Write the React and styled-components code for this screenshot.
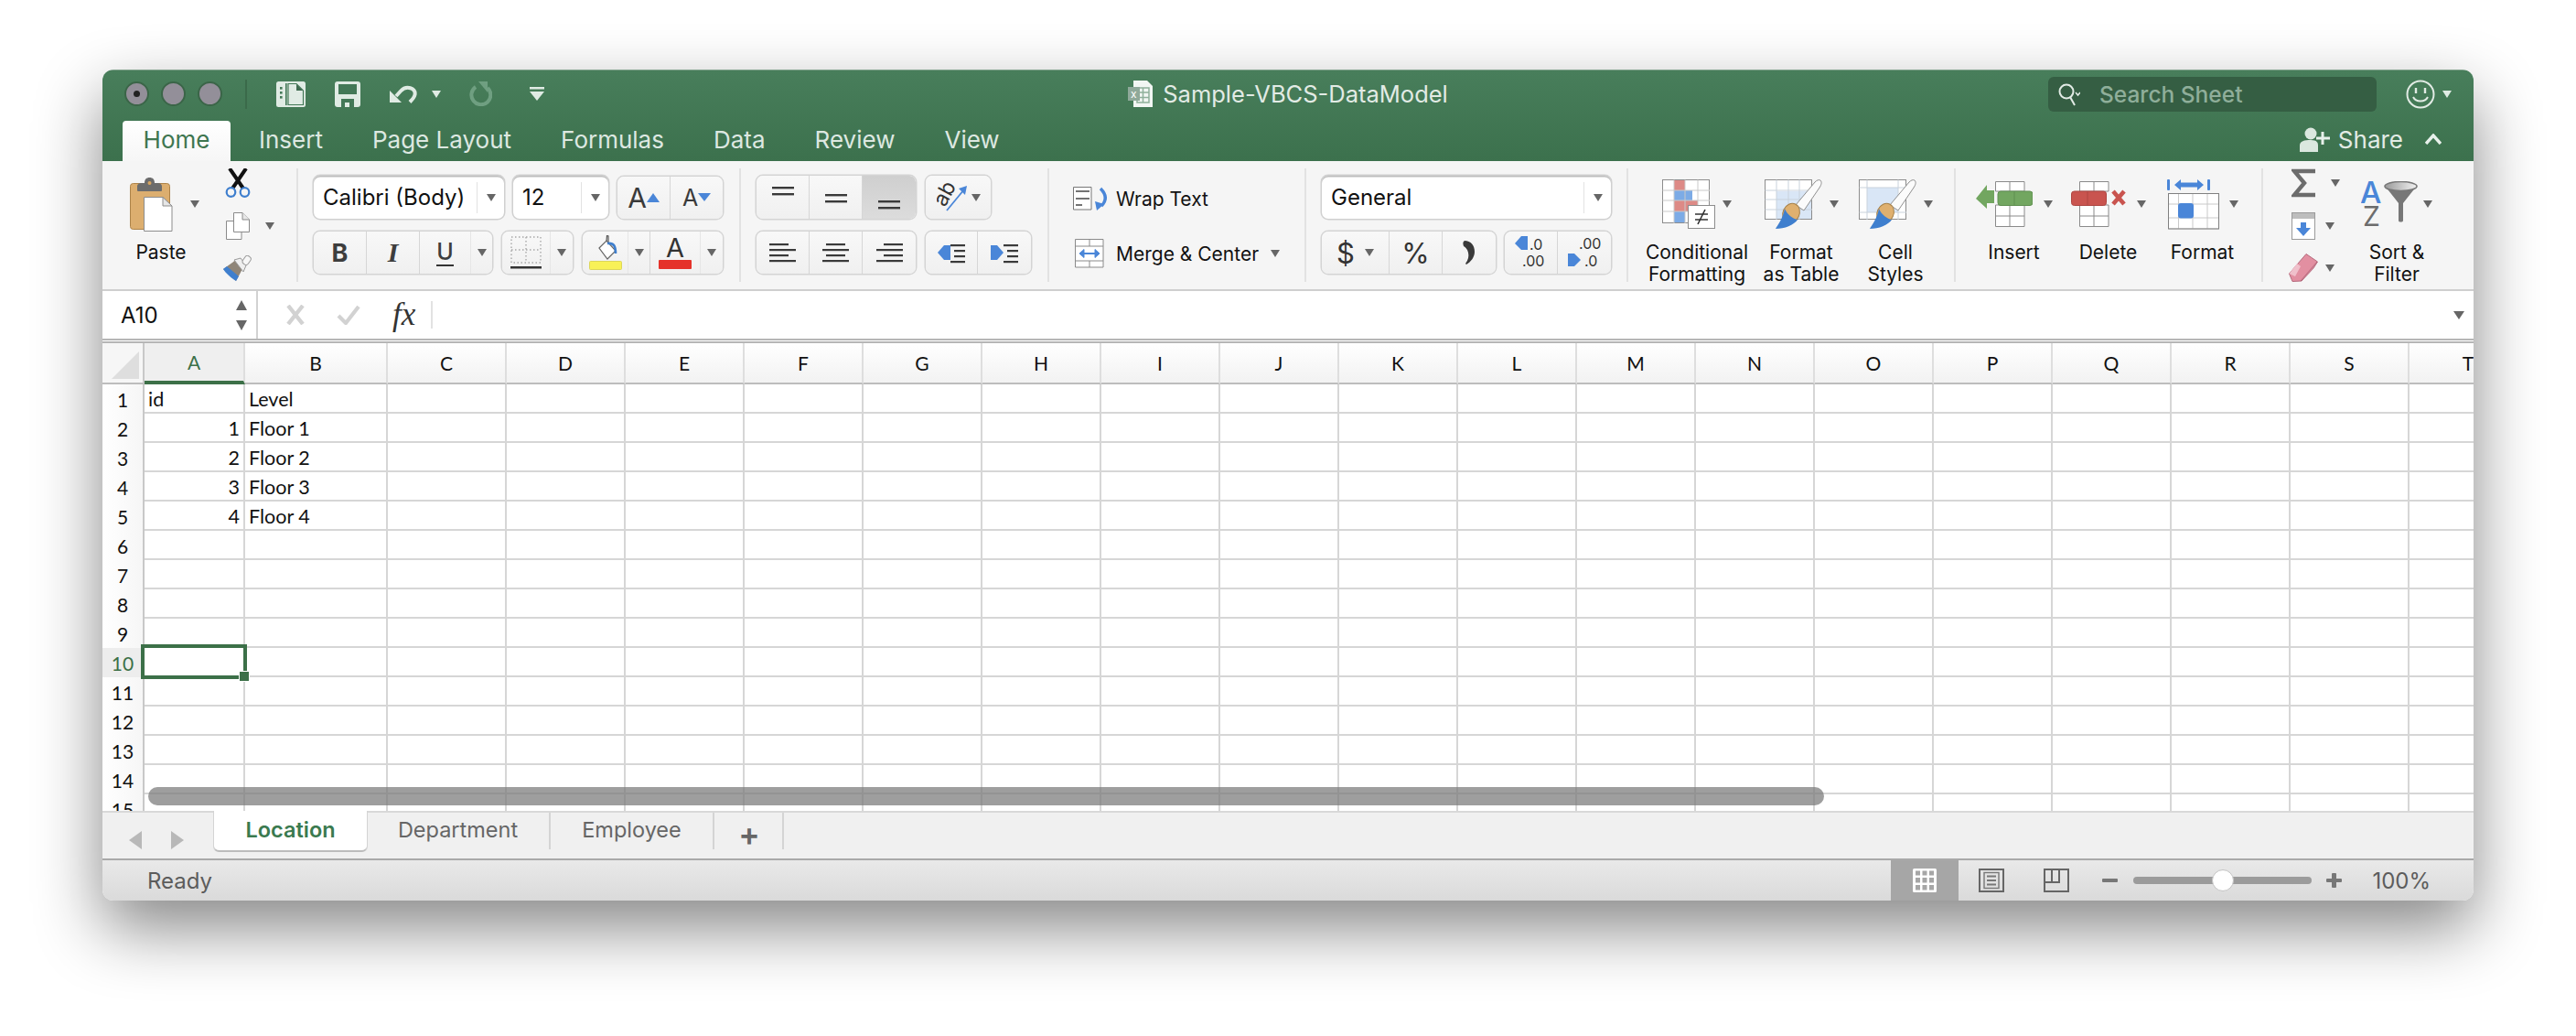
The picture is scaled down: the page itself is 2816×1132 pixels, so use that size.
import React from 'react';
import styled, { createGlobalStyle } from 'styled-components';

const GlobalStyle = createGlobalStyle`
  html, body { margin: 0; padding: 0; background: #fff; }
  body { font-family: Inter, "Liberation Sans", sans-serif; }
  svg { display: block; flex: none; }
`;

const Stage = styled.div`
  width: 2816px;
  height: 1132px;
  padding: 76px 112px 0;
  box-sizing: border-box;
  background: #fff;
  overflow: hidden;
`;

const Window = styled.div`
  width: 2592px;
  height: 908px;
  display: flex;
  flex-direction: column;
  border-radius: 12px;
  overflow: hidden;
  box-shadow: 0 30px 72px rgba(0, 0, 0, 0.48);
`;

const TitleBar = styled.div`
  height: 100px;
  flex: none;
  background: linear-gradient(#487e5b, #3c714d);
  border-top: 1px solid #7d9f88;
  box-sizing: border-box;
`;

const TitleRow = styled.div`
  height: 55px;
  padding-bottom: 4px;
  box-sizing: border-box;
  display: grid;
  grid-template-columns: 1fr auto 1fr;
  align-items: center;
`;

const QuickBar = styled.div`
  display: flex;
  align-items: center;
  padding-left: 24px;
`;

const Light = styled.div`
  width: 27px;
  height: 27px;
  margin-right: 13px;
  border-radius: 50%;
  background: #938f99;
  border: 2px solid #3b6548;
  box-sizing: border-box;
  display: flex;
  align-items: center;
  justify-content: center;
  &::after {
    content: '';
    display: ${p => (p.$dot ? 'block' : 'none')};
    width: 7px;
    height: 7px;
    border-radius: 50%;
    background: #222;
  }
`;

const QuickSep = styled.div`
  width: 2px;
  height: 32px;
  margin-left: 12px;
  background: #3b6a4a;
`;

const Tool = styled.div`
  margin-left: ${p => p.$ml || 0}px;
`;

const DocTitle = styled.div`
  display: flex;
  align-items: center;
  gap: 10px;
  font-size: 25.5px;
  color: #e2ebe5;
`;

const TitleRight = styled.div`
  display: flex;
  align-items: center;
  justify-content: flex-end;
  padding-right: 24px;
`;

const Search = styled.div`
  width: 359px;
  height: 38px;
  margin-right: 32px;
  padding-left: 11px;
  box-sizing: border-box;
  display: flex;
  align-items: center;
  gap: 21px;
  background: #355e43;
  border-radius: 6px;
  color: #8fae9a;
  font-size: 24.5px;
  font-weight: 500;
`;

const TabRow = styled.div`
  height: 44px;
  padding-left: 22px;
  display: flex;
  align-items: stretch;
`;

const Tab = styled.div`
  display: flex;
  align-items: center;
  padding: 0 27px 3px;
  font-size: 26px;
  white-space: nowrap;
  color: #dde8e1;
`;

const HomeTab = styled(Tab)`
  width: 118px;
  box-sizing: border-box;
  justify-content: center;
  padding: 0 0 3px;
  margin-right: 4px;
  background: linear-gradient(#fff, #f6f6f6);
  border-radius: 4px 4px 0 0;
  color: #3f7650;
`;

const ShareBox = styled.div`
  margin-left: auto;
  padding: 0 35px 4px 0;
  display: flex;
  align-items: center;
  font-size: 26px;
  color: #e2ebe5;
`;

const ShareText = styled.span`
  margin: 0 24px 0 8px;
`;

const Ribbon = styled.div`
  height: 142px;
  flex: none;
  padding: 8px 0;
  box-sizing: border-box;
  display: flex;
  background: #f5f5f5;
  border-bottom: 2px solid #cfcfcf;
`;

const Group = styled.div`
  width: ${p => p.$w}px;
  height: 124px;
  flex: none;
  box-sizing: border-box;
  padding: ${p => p.$pad};
  display: flex;
  flex-direction: ${p => p.$dir || 'row'};
  gap: ${p => p.$gap || 0}px;
  border-right: ${p => (p.$last ? 'none' : '2px solid #e2e2e2')};
`;

const Row = styled.div`
  height: ${p => p.$h || 46}px;
  display: flex;
  align-items: center;
  gap: ${p => p.$gap || 10}px;
`;

const Combo = styled.div`
  width: ${p => p.$w}px;
  height: 47px;
  padding-left: 10px;
  box-sizing: border-box;
  display: flex;
  align-items: center;
  background: #fff;
  border-radius: 7px;
  font-size: 24px;
  color: #111;
  box-shadow: 0 0 0 1.5px #d0d0d0, inset 0 1.5px 0 #bdbdbd;
`;

const ComboArrow = styled.div`
  margin-left: auto;
  width: 29px;
  height: 34px;
  border-left: 1px solid #e2e2e2;
  display: flex;
  align-items: center;
  justify-content: center;
`;

const Seg = styled.div`
  display: flex;
  background: linear-gradient(#f8f8f8, #f0f0f0);
  border-radius: 7px;
  box-shadow: 0 0 0 1.5px #d4d4d4;
  overflow: hidden;
`;

const Cell = styled.div`
  width: ${p => p.$w}px;
  height: ${p => p.$h || 46}px;
  box-sizing: border-box;
  display: flex;
  align-items: center;
  justify-content: center;
  gap: ${p => p.$gap || 0}px;
  color: #333;
  background: ${p => (p.$active ? 'linear-gradient(#cfcfcf, #dcdcdc)' : 'transparent')};
  border-right: ${p => (p.$last ? 'none' : `1.5px solid ${p.$thin ? '#e6e6e6' : '#d6d6d6'}`)};
`;

const Caret = styled.div`
  width: 0;
  height: 0;
  flex: none;
  border-left: ${p => p.$s || 5}px solid transparent;
  border-right: ${p => p.$s || 5}px solid transparent;
  border-top: ${p => (p.$s || 5) * 1.6}px solid ${p => p.$c || '#666'};
`;

const CaretUp = styled.div`
  width: 0;
  height: 0;
  border-left: 6px solid transparent;
  border-right: 6px solid transparent;
  border-bottom: 11px solid #666;
`;

const CaretDown = styled(CaretUp)`
  border-bottom: none;
  border-top: 11px solid #666;
`;

const Bold = styled.span`
  font: 700 27px Inter, sans-serif;
  color: #3d3d3d;
`;

const Ital = styled.span`
  font: italic 700 30px "Liberation Serif", serif;
  color: #3d3d3d;
`;

const Under = styled.span`
  font: 500 25px Inter, sans-serif;
  color: #3d3d3d;
  line-height: 27px;
  border-bottom: 2.5px solid #333;
`;

const GrowA = styled.span`
  font: 400 ${p => p.$s}px Inter, sans-serif;
  color: #3a3a3a;
`;

const TextCmd = styled.div`
  height: 46px;
  width: 100%;
  display: flex;
  align-items: center;
  font-size: 21px;
  color: #111;
`;

const CmdIcon = styled.div`
  width: 47px;
  flex: none;
  padding-left: ${p => p.$pl || 0}px;
  box-sizing: border-box;
`;

const CmdCaret = styled.div`
  margin-left: 13px;
`;

const Symbol = styled.span`
  font: 400 ${p => p.$s || 31}px Inter, sans-serif;
  color: #333;
`;

const BigButton = styled.div`
  width: ${p => p.$w}px;
  flex: none;
  padding-top: ${p => p.$top ?? 8}px;
  display: flex;
  flex-direction: column;
  align-items: center;
`;

const IconRow = styled.div`
  height: 62px;
  flex: none;
  margin-left: ${p => p.$shift || 0}px;
  display: flex;
  align-items: center;
  gap: ${p => p.$gap || 8}px;
`;

const BigLabel = styled.div`
  margin-top: 10px;
  flex: none;
  font-size: 21px;
  line-height: 24px;
  color: #111;
  text-align: center;
  white-space: pre-line;
`;

const SmallCol = styled.div`
  width: ${p => p.$w}px;
  flex: none;
  display: flex;
  flex-direction: column;
  justify-content: space-between;
`;

const SmallRow = styled.div`
  height: ${p => p.$h}px;
  display: flex;
  align-items: center;
  gap: ${p => p.$gap || 10}px;
`;

const SmallIcon = styled.div`
  width: 32px;
  flex: none;
  display: flex;
  justify-content: center;
`;

const FormulaBar = styled.div`
  height: 57px;
  flex: none;
  box-sizing: border-box;
  display: flex;
  align-items: center;
  background: #fff;
  border-bottom: 5px double #b6b6b6;
`;

const NameBox = styled.div`
  width: 170px;
  height: 52px;
  flex: none;
  box-sizing: border-box;
  padding: 0 10px 0 20px;
  display: flex;
  align-items: center;
  justify-content: space-between;
  border-right: 2px solid #d2d2d2;
  font-size: 24px;
  color: #111;
`;

const Spinner = styled.div`
  display: flex;
  flex-direction: column;
  gap: 11px;
`;

const FormulaTools = styled.div`
  display: flex;
  align-items: center;
  gap: 35px;
  padding-left: 31px;
`;

const FxSep = styled.div`
  width: 2px;
  height: 30px;
  margin-left: -18px;
  background: #e2e2e2;
`;

const Fx = styled.span`
  font: italic 400 35px "Liberation Serif", serif;
  color: #333;
`;

const FormulaEnd = styled.div`
  margin-left: auto;
  padding-right: 10px;
`;

const Sheet = styled.div`
  position: relative;
  height: 511px;
  flex: none;
  background: #fff;
  overflow: hidden;
`;

const SheetRow = styled.div`
  display: flex;
  height: ${p => p.$h || 32}px;
`;

const RowHead = styled.div`
  width: 46px;
  flex: none;
  box-sizing: border-box;
  display: flex;
  align-items: center;
  justify-content: center;
  padding-top: 1px;
  font: 400 21px Lato, sans-serif;
  color: ${p => (p.$on ? '#3c7048' : '#111')};
  background: ${p => (p.$on ? '#ededed' : 'linear-gradient(90deg, #fff, #f6f6f6)')};
  border-right: 2px solid #c8c8c8;
`;

const Corner = styled.div`
  width: 46px;
  flex: none;
  box-sizing: border-box;
  padding: 9px 0 0 10px;
  background: #f6f6f6;
  border-right: 2px solid #c8c8c8;
  border-bottom: 2px solid #bdbdbd;
`;

const CornerMark = styled.div`
  width: 30px;
  height: 30px;
  background: #dedede;
  clip-path: polygon(100% 0, 100% 100%, 0 100%);
`;

const ColHead = styled.div`
  width: ${p => p.$w}px;
  flex: none;
  box-sizing: border-box;
  display: flex;
  align-items: center;
  justify-content: center;
  font: 400 21px Lato, sans-serif;
  color: ${p => (p.$on ? '#3c7048' : '#111')};
  background: ${p => (p.$on ? '#efefef' : 'linear-gradient(#fff, #f2f2f2)')};
  border-right: 2px solid #dedede;
  border-bottom: ${p => (p.$on ? '4px solid #3c7048' : '2px solid #bdbdbd')};
`;

const GridCell = styled.div`
  position: relative;
  width: ${p => p.$w}px;
  flex: none;
  box-sizing: border-box;
  padding: 2px ${p => (p.$num ? 4 : 3)}px 0 4px;
  display: flex;
  align-items: center;
  justify-content: ${p => (p.$num ? 'flex-end' : 'flex-start')};
  border-right: 2px solid #d6d6d6;
  border-bottom: 2px solid #d6d6d6;
  font: 400 21.5px Lato, sans-serif;
  color: #111;
`;

const Selection = styled.div`
  position: absolute;
  left: -4px;
  top: -4px;
  width: 116px;
  height: 38px;
  box-sizing: border-box;
  border: 4px solid #3c7048;
  z-index: 2;
  &::after {
    content: '';
    position: absolute;
    right: -7px;
    bottom: -7px;
    width: 12px;
    height: 12px;
    background: #3c7048;
    border: 1px solid #fff;
    box-sizing: border-box;
  }
`;

const ScrollThumb = styled.div`
  position: absolute;
  left: 50px;
  top: 485px;
  width: 1832px;
  height: 20px;
  border-radius: 10px;
  background: rgba(120, 120, 120, 0.72);
  z-index: 3;
`;

const TabBar = styled.div`
  height: 52px;
  flex: none;
  box-sizing: border-box;
  display: flex;
  background: #f0f0f0;
  border-top: 2px solid #d8d8d8;
`;

const TabArrows = styled.div`
  width: 122px;
  flex: none;
  box-sizing: border-box;
  padding: 10px 0 0 29px;
  display: flex;
  align-items: center;
  gap: 32px;
`;

const ArrowLeft = styled.div`
  width: 0;
  height: 0;
  border-top: 10px solid transparent;
  border-bottom: 10px solid transparent;
  border-right: 14px solid #b8b8b8;
`;

const ArrowRight = styled(ArrowLeft)`
  border-right: none;
  border-left: 14px solid #b8b8b8;
`;

const SheetTab = styled.div`
  width: ${p => p.$w}px;
  height: 40px;
  flex: none;
  box-sizing: border-box;
  padding-bottom: 4px;
  display: flex;
  align-items: center;
  justify-content: center;
  font-size: 23.5px;
  color: #666;
  border-right: 2px solid #d4d4d4;
`;

const ActiveTab = styled(SheetTab)`
  height: 45px;
  margin-top: -2px;
  padding-bottom: 3px;
  background: #fff;
  color: #3a7a4f;
  font-weight: 600;
  border-right: none;
  border-bottom: 2px solid #bcbcbc;
  border-radius: 0 0 6px 6px;
  box-shadow: -1px 0 0 #d4d4d4, 1px 0 0 #d4d4d4;
`;

const AddTab = styled(SheetTab)`
  padding: 5px 0 0 2px;
  font-size: 35px;
  font-weight: 600;
`;

const StatusBar = styled.div`
  flex: 1;
  box-sizing: border-box;
  display: flex;
  align-items: stretch;
  padding-left: 49px;
  background: linear-gradient(#e9e9e9, #dadada);
  border-top: 2px solid #a9a9a9;
  font-size: 24px;
  color: #5c5c5c;
`;

const Ready = styled.div`
  display: flex;
  align-items: center;
  margin-right: auto;
`;

const ViewBtn = styled.div`
  width: ${p => p.$w}px;
  flex: none;
  display: flex;
  align-items: center;
  justify-content: center;
  background: ${p => (p.$on ? '#a6a6a6' : 'transparent')};
`;

const Zoom = styled.div`
  display: flex;
  align-items: center;
  padding-left: 15px;
  padding-right: 47px;
`;

const ZoomMark = styled.div`
  position: relative;
  width: 17px;
  height: 4px;
  border-radius: 1px;
  background: #777;
  &::after {
    content: '';
    display: ${p => (p.$plus ? 'block' : 'none')};
    position: absolute;
    left: 6px;
    top: -6px;
    width: 5px;
    height: 16px;
    border-radius: 1px;
    background: #777;
  }
`;

const Slider = styled.div`
  position: relative;
  width: 195px;
  height: 8px;
  margin: 0 16px 0 17px;
  border-radius: 4px;
  background: #9b9b9b;
`;

const Thumb = styled.div`
  position: absolute;
  left: 86px;
  top: -8px;
  width: 24px;
  height: 24px;
  box-sizing: border-box;
  border-radius: 50%;
  background: #fff;
  border: 1px solid #c2c2c2;
`;

const ZoomValue = styled.div`
  margin-left: 33px;
`;

const ICON = '#e0ebe4';
const GREEN = '#437857';

const SidebarIcon = () => (
  <svg width="32" height="28" viewBox="0 0 32 28">
    <rect width="32" height="28" rx="2.5" fill={ICON} />
    <rect x="10" y="2" width="1.6" height="24" fill={GREEN} />
    <path d="M13 2.5H22L29.5 10V25.5H13Z" fill={ICON} stroke={GREEN} strokeWidth="1.2" />
    <path d="M22 3V10H29" fill="#3f6a50" />
    <rect x="4" y="6" width="2.6" height="2.6" fill={GREEN} />
    <rect x="4" y="11" width="2.6" height="2.6" fill={GREEN} />
    <rect x="4" y="16" width="2.6" height="2.6" fill={GREEN} />
  </svg>
);

const SaveIcon = () => (
  <svg width="28" height="28" viewBox="0 0 28 28">
    <path d="M3 0H25A3 3 0 0 1 28 3V25A3 3 0 0 1 25 28H3A3 3 0 0 1 0 25V3A3 3 0 0 1 3 0Z" fill={ICON} />
    <rect x="4" y="3" width="20" height="11" fill={GREEN} />
    <rect x="7" y="19" width="14" height="9" fill={GREEN} />
    <rect x="11" y="23" width="5" height="5" fill={ICON} />
  </svg>
);

const UndoIcon = ({ c = ICON }) => (
  <svg width="30" height="21" viewBox="0 0 30 21">
    <path d="M0 7L13 20H0Z" fill={c} />
    <path d="M7 13L12 7.5C18 1 29 4 27.5 11.5C27 14.5 24.5 17 22 19.5" fill="none" stroke={c} strokeWidth="4" />
  </svg>
);

const RedoIcon = () => (
  <svg width="26" height="27" viewBox="0 0 26 27">
    <path d="M8 6A10.5 10.5 0 1 0 21 7" fill="none" stroke="#6f9f81" strokeWidth="4" />
    <path d="M11 0L21 0L21 12Z" fill="#6f9f81" />
  </svg>
);

const CustomizeIcon = () => (
  <svg width="16" height="16" viewBox="0 0 16 16">
    <rect width="16" height="2.5" fill={ICON} />
    <path d="M0 5H16L8 15Z" fill={ICON} />
  </svg>
);

const XlsDocIcon = () => (
  <svg width="28" height="29" viewBox="0 0 28 29">
    <path d="M6 0H21L27 6V29H6Z" fill="#f2f6f3" />
    <path d="M10 8H23V24H10ZM10 13H23M10 18.5H23M16.5 8V24" fill="none" stroke="#8fb09b" strokeWidth="1.5" />
    <rect y="7" width="13" height="15" fill="#8fa99a" />
    <text x="3" y="19" fontSize="12" fontFamily="Inter" fill="#fff">x</text>
  </svg>
);

const MagnifierIcon = () => (
  <svg width="24" height="26" viewBox="0 0 24 26">
    <circle cx="9" cy="10" r="7.5" fill="none" stroke="#e2ebe5" strokeWidth="2" />
    <path d="M13 16L18 25" stroke="#e2ebe5" strokeWidth="2" />
    <path d="M19 11L21.5 14L24 11" fill="none" stroke="#e2ebe5" strokeWidth="1.5" />
  </svg>
);

const SmileIcon = () => (
  <svg width="32" height="32" viewBox="0 0 32 32">
    <ellipse cx="16" cy="16" rx="14.5" ry="14.5" fill="none" stroke="#e2ebe5" strokeWidth="2" />
    <path d="M11 9V15M21 9V15" stroke="#e2ebe5" strokeWidth="2.4" />
    <path d="M8 19C11 25 21 25 24 19" fill="none" stroke="#e2ebe5" strokeWidth="2" />
  </svg>
);

const ShareIcon = () => (
  <svg width="34" height="28" viewBox="0 0 34 28">
    <circle cx="12" cy="8" r="6.5" fill="#dbe7df" />
    <path d="M0 28V21C0 16 5 15 12 15C19 15 20 18 20 21V28Z" fill="#dbe7df" />
    <path d="M25 6V20M18 13H33" stroke="#e8f0eb" strokeWidth="3" />
  </svg>
);

const ChevronUp = () => (
  <svg width="18" height="12" viewBox="0 0 18 12">
    <path d="M1 11L9 2L17 11" fill="none" stroke="#e8f0eb" strokeWidth="3.4" />
  </svg>
);

const PasteIcon = () => (
  <svg width="47" height="59" viewBox="0 0 47 59">
    <rect x="0.5" y="6.5" width="43" height="50" rx="3" fill="#dcae6f" stroke="#ad8349" />
    <path d="M8 10C8 7 10 6 13 6H16C16 2 18 0 21.5 0S27 2 27 6H30C33 6 35 7 35 10V14C35 15 34 15 33 15H10C9 15 8 15 8 14Z" fill="#6c6c6c" />
    <circle cx="21.5" cy="6" r="2" fill="#d6a45f" />
    <path d="M15.5 21.5H36L46 31V58.5H15.5Z" fill="#fff" stroke="#8d8d8d" />
    <path d="M36 21.5V31H46Z" fill="#e6e6e6" stroke="#8d8d8d" />
  </svg>
);

const ScissorsIcon = () => (
  <svg width="28" height="32" viewBox="0 0 28 32">
    <path d="M5 0L20 22M23 0L8 22" stroke="#111" strokeWidth="4" />
    <circle cx="6.5" cy="26" r="4.8" fill="#f5f5f5" stroke="#3f7fce" strokeWidth="2.2" />
    <circle cx="21.5" cy="26" r="4.8" fill="#f5f5f5" stroke="#3f7fce" strokeWidth="2.2" />
  </svg>
);

const CopyIcon = () => (
  <svg width="26" height="30" viewBox="0 0 26 30">
    <path d="M0.5 9.5H17V29.5H0.5Z" fill="#fff" stroke="#8a8a8a" />
    <path d="M8.5 0.5H18L25.5 8V21.5H8.5Z" fill="#fff" stroke="#8a8a8a" />
    <path d="M18 0.5V8H25.5" fill="#e8e8e8" stroke="#8a8a8a" />
  </svg>
);

const FormatPainterIcon = () => (
  <svg width="32" height="28" viewBox="0 0 32 28">
    <path d="M0 15L14 5L21 15L14 28Z" fill="#8f8578" />
    <path d="M0 15C3 20 9 25 14 28L17 23L4 12Z" fill="#3f7fce" />
    <path d="M12 5L19 3L25 11L22 18Z" fill="#efefef" stroke="#9a9a9a" />
    <rect x="22.5" y="0.5" width="7" height="10" rx="3" transform="rotate(35 26 5)" fill="#f7f7f7" stroke="#9a9a9a" />
  </svg>
);

const BorderIcon = () => (
  <svg width="34" height="36" viewBox="0 0 34 36">
    <path d="M1 1H33V29H1ZM17 1V29M1 15H33" fill="none" stroke="#a8a8a8" strokeWidth="1.4" strokeDasharray="1.5 2.5" />
    <rect y="33" width="34" height="2.5" fill="#333" />
  </svg>
);

const FillIcon = () => (
  <svg width="36" height="38" viewBox="0 0 36 38">
    <path d="M11 14L19 6L29 17L20 26Z" fill="#fff" stroke="#666" strokeWidth="1.2" />
    <path d="M19 6L19.5 0.5L21 1V10" fill="none" stroke="#555" strokeWidth="1.2" />
    <path d="M20 9C27 8 29 12 29 20" fill="none" stroke="#3f7fce" strokeWidth="2.6" />
    <rect x="0.5" y="28.5" width="35" height="9" rx="1" fill="#f8f157" stroke="#dcd65a" />
  </svg>
);

const ColorAIcon = () => (
  <svg width="36" height="36" viewBox="0 0 36 36">
    <text x="18" y="23" textAnchor="middle" fontFamily="Inter" fontSize="29" fill="#333">A</text>
    <rect y="26" width="36" height="10" rx="1" fill="#e5322a" />
  </svg>
);

const VAlignIcon = ({ y }) => (
  <svg width="24" height="46" viewBox="0 0 24 46">
    <rect y={y} width="24" height="2.4" fill="#3a3a3a" />
    <rect y={y + 7} width="24" height="2.4" fill="#3a3a3a" />
  </svg>
);

const HAlignIcon = ({ short }) => {
  const x = { left: 0, center: 4, right: 8 }[short];
  return (
    <svg width="29" height="22" viewBox="0 0 29 22">
      <rect y="1" x={x} width="21" height="2.2" fill="#3a3a3a" />
      <rect y="7" width="29" height="2.2" fill="#3a3a3a" />
      <rect y="13" x={x} width="21" height="2.2" fill="#3a3a3a" />
      <rect y="19" width="29" height="2.2" fill="#3a3a3a" />
    </svg>
  );
};

const IndentIcon = ({ flip }) => (
  <svg width="30" height="24" viewBox="0 0 30 24">
    {flip ? <path d="M0 4H7L14 12L7 20H0Z" fill="#4a86d8" /> : <path d="M14 4H7L0 12L7 20H14Z" fill="#4a86d8" />}
    <rect x="14" y="3" width="16" height="2.2" fill="#3a3a3a" />
    <rect x="18" y="9" width="12" height="2.2" fill="#3a3a3a" />
    <rect x="18" y="15" width="12" height="2.2" fill="#3a3a3a" />
    <rect x="14" y="21" width="16" height="2.2" fill="#3a3a3a" />
  </svg>
);

const OrientIcon = () => (
  <svg width="34" height="32" viewBox="0 0 34 32">
    <text x="0" y="0" transform="translate(9 27) rotate(-62)" fontFamily="Inter" fontSize="23" fill="#333">ab</text>
    <path d="M11 30L30 7" stroke="#4a86d8" strokeWidth="1.8" />
    <path d="M24 6L33 3L31 13Z" fill="#4a86d8" />
  </svg>
);

const WrapIcon = () => (
  <svg width="39" height="26" viewBox="0 0 39 26">
    <path d="M0.5 0.5H20V25H0.5Z" fill="#fff" stroke="#777" />
    <path d="M3 5H18" stroke="#444" strokeWidth="1.6" />
    <path d="M3 13H18" stroke="#444" strokeWidth="1.6" />
    <path d="M3 20H10" stroke="#444" strokeWidth="1.6" />
    <path d="M30 2C37 9 37 15 31 21" fill="none" stroke="#4a86d8" strokeWidth="3.4" />
    <path d="M24 16L34 19L26 26Z" fill="#4a86d8" />
  </svg>
);

const MergeIcon = () => (
  <svg width="32" height="32" viewBox="0 0 32 32">
    <path d="M0.5 0.5H31V31H0.5ZM0.5 8H31M0.5 24H31M16 0.5V8M16 24V31" fill="#fff" stroke="#8a8a8a" />
    <path d="M6 16H26" stroke="#4a86d8" strokeWidth="2" />
    <path d="M10 11.5L5 16L10 20.5ZM22 11.5L27 16L22 20.5Z" fill="#4a86d8" stroke="#4a86d8" />
  </svg>
);

const CommaIcon = () => (
  <svg width="14" height="26" viewBox="0 0 14 26">
    <path d="M2 0C9 0 13 5 13 12C13 18 9 23 4 26L3 25C6 21 7 17 6 13C5 9 3 7 1 6C0 3 0 1 2 0Z" fill="#3a3a3a" />
  </svg>
);

const DecIcon = ({ down }) => (
  <svg width="36" height="36" viewBox="0 0 36 36">
    {down ? (
      <>
        <text x="12" y="14" fontFamily="Inter" fontSize="16" fill="#333">.00</text>
        <path d="M0 19H7L14 26L7 33H0Z" fill="#4a86d8" />
        <text x="18" y="33" fontFamily="Inter" fontSize="16" fill="#333">.0</text>
      </>
    ) : (
      <>
        <path d="M14 0H7L0 8L7 15H14Z" fill="#4a86d8" />
        <text x="16" y="15" fontFamily="Inter" fontSize="16" fill="#333">.0</text>
        <text x="8" y="33" fontFamily="Inter" fontSize="16" fill="#333">.00</text>
      </>
    )}
  </svg>
);

const CondFormatIcon = () => (
  <svg width="58" height="54" viewBox="0 0 58 54">
    <rect x="0.5" y="0.5" width="51" height="47" fill="#fff" stroke="#8c8c8c" />
    <rect x="13" y="1" width="12" height="11" fill="#dd8a86" />
    <rect x="13" y="12" width="20" height="11" fill="#7cabe6" />
    <rect x="13" y="23" width="26" height="12" fill="#dd8a86" />
    <rect x="13" y="35" width="12" height="12" fill="#7cabe6" />
    <path d="M0.5 12H52M0.5 23H52M0.5 35H52M13 0.5V48M25 0.5V48M39 0.5V48" stroke="#c9c9c9" fill="none" />
    <rect x="28.5" y="28.5" width="29" height="25" fill="#fff" stroke="#8c8c8c" />
    <path d="M36 38H50M36 44H50M39 49L47 33" stroke="#333" strokeWidth="1.6" />
  </svg>
);

const Brush = () => (
  <>
    <path d="M61 1C63 3 62 6 60 9L43 34L34 28L55 3C57 1 59 0 61 1Z" fill="#fbfbfb" stroke="#8f8f8f" />
    <ellipse cx="29" cy="37" rx="9" ry="11" transform="rotate(25 29 37)" fill="#dfb06f" stroke="#a68149" />
    <path d="M22 32C20 43 14 50 12 54C22 54 32 50 36 44C31 43 25 39 22 32Z" fill="#3f7fce" />
  </>
);

const TableStyleIcon = () => (
  <svg width="63" height="55" viewBox="0 0 63 55">
    <rect x="0.5" y="0.5" width="51" height="43" fill="#fff" stroke="#8c8c8c" />
    <rect x="13" y="13" width="38" height="30" fill="#d9e6f6" />
    <path d="M0.5 12H52M0.5 22H52M0.5 33H52M13 0.5V44M26 0.5V44M38 0.5V44" stroke="#c9d2dc" fill="none" />
    <Brush />
  </svg>
);

const CellStyleIcon = () => (
  <svg width="63" height="55" viewBox="0 0 63 55">
    <rect x="0.5" y="0.5" width="51" height="43" fill="#fff" stroke="#8c8c8c" />
    <rect x="9" y="9" width="34" height="27" fill="#d9e6f6" />
    <path d="M9 0.5V44M43 0.5V44M0.5 9H52M0.5 36H52" stroke="#c9d2dc" fill="none" />
    <Brush />
  </svg>
);

const InsertIcon = () => (
  <svg width="62" height="50" viewBox="0 0 62 50">
    <path d="M21.5 0.5H53V11H21.5ZM37 0.5V11" fill="#fff" stroke="#8a8a8a" />
    <path d="M21.5 26H53V49.5H21.5ZM21.5 38H53M37 26V49.5" fill="#fff" stroke="#8a8a8a" />
    <rect x="24" y="11" width="38" height="15.5" rx="3" fill="#72a660" stroke="#5f8f50" />
    <path d="M42 11V26" stroke="#5f8f50" />
    <path d="M20 10H12V4L0 19L12 30V24H20Z" fill="#72a660" />
  </svg>
);

const DeleteIcon = () => (
  <svg width="60" height="50" viewBox="0 0 60 50">
    <path d="M9.5 0.5H41V11H9.5ZM25 0.5V11" fill="#fff" stroke="#8a8a8a" />
    <path d="M9.5 26H41V49.5H9.5ZM9.5 38H41M25 26V49.5" fill="#fff" stroke="#8a8a8a" />
    <rect x="0.5" y="11" width="38" height="15.5" rx="3" fill="#c9544f" stroke="#ae4642" />
    <path d="M18 11V26" stroke="#ae4642" />
    <path d="M46 11L58 25M58 11L46 25" stroke="#c9544f" strokeWidth="4.6" />
  </svg>
);

const FormatCellsIcon = () => (
  <svg width="57" height="55" viewBox="0 0 57 55">
    <rect x="0" y="0" width="3" height="12" rx="1" fill="#4a86d8" />
    <rect x="44" y="0" width="3" height="12" rx="1" fill="#4a86d8" />
    <path d="M8 6L15 0V3.5H33V0L40 6L33 12V8.5H15V12Z" fill="#4a86d8" />
    <path d="M1.5 15.5H56.5V54H1.5ZM12.5 15.5V54M28 15.5V54M44 15.5V54M1.5 27H56.5M1.5 42H56.5" fill="#fff" stroke="#c9c9c9" />
    <rect x="1.5" y="15.5" width="55" height="38.5" fill="none" stroke="#808080" />
    <rect x="12" y="26" width="17" height="16.5" rx="3" fill="#4a86d8" />
  </svg>
);

const SigmaIcon = () => (
  <svg width="26" height="32" viewBox="0 0 26 32">
    <path d="M26 3H3L14 16L3 29H26" fill="none" stroke="#6c6c6c" strokeWidth="4.4" />
  </svg>
);

const FillDownIcon = () => (
  <svg width="26" height="30" viewBox="0 0 26 30">
    <rect x="0.5" y="0.5" width="25" height="29" fill="#fff" stroke="#9a9a9a" />
    <rect x="1" y="1" width="24" height="6" fill="#bdbdbd" />
    <path d="M10 11H16V17H21L13 26L5 17H10Z" fill="#4a86d8" />
  </svg>
);

const EraserIcon = () => (
  <svg width="32" height="31" viewBox="0 0 32 31">
    <path d="M19 0.5L31.5 9L27 16L14 30L4 30.5L0.5 22Z" fill="#e28fa1" stroke="#b56a7d" />
    <path d="M0.5 22L9 11L13 14L7 25Z" fill="#f0c0cb" />
    <path d="M13 30L31 9" stroke="#b56a7d" strokeWidth="1" />
  </svg>
);

const SortFilterIcon = () => (
  <svg width="62" height="50" viewBox="0 0 62 50">
    <text x="-1" y="24" fontFamily="Inter" fontSize="33" fontWeight="500" fill="#4a86d8">A</text>
    <text x="2" y="49" fontFamily="Inter" fontSize="30" fill="#6c6c6c">Z</text>
    <defs>
      <linearGradient id="funnelTop" x1="0" x2="1" y1="0" y2="0">
        <stop offset="0" stopColor="#9a9a9a" />
        <stop offset="1" stopColor="#f2f2f2" />
      </linearGradient>
    </defs>
    <path d="M26 5L41 24V43C41 45 46 45 46 43V24L61 5Z" fill="#777" />
    <ellipse cx="43.5" cy="5.5" rx="17.5" ry="5" fill="url(#funnelTop)" stroke="#777" strokeWidth="1.6" />
  </svg>
);

const GridViewIcon = () => (
  <svg width="26" height="26" viewBox="0 0 26 26">
    <rect width="26" height="26" rx="1.5" fill="#fff" />
    <path d="M3 2.5H8V7.5H3ZM10.5 2.5H15.5V7.5H10.5ZM18 2.5H23V7.5H18ZM3 10H8V15.5H3ZM10.5 10H15.5V15.5H10.5ZM18 10H23V15.5H18ZM3 18H8V23.5H3ZM10.5 18H15.5V23.5H10.5ZM18 18H23V23.5H18Z" fill="#a6a6a6" />
  </svg>
);

const PageViewIcon = () => (
  <svg width="28" height="26" viewBox="0 0 28 26">
    <rect x="1" y="1" width="26" height="24" fill="none" stroke="#666" strokeWidth="2" />
    <rect x="6" y="4.5" width="16" height="17" fill="none" stroke="#777" strokeWidth="1.4" />
    <path d="M9 8.5H19M9 13H19M9 17.5H19" stroke="#777" strokeWidth="2" />
  </svg>
);

const BreakViewIcon = () => (
  <svg width="28" height="26" viewBox="0 0 28 26">
    <path d="M1 1H27V25H1ZM1 15H17V1M9 1V15" fill="none" stroke="#666" strokeWidth="2" />
  </svg>
);

const CancelIcon = () => (
  <svg width="20" height="22" viewBox="0 0 20 22">
    <path d="M2 1L18 21M18 1L2 21" stroke="#d2d2d2" strokeWidth="4.4" />
  </svg>
);

const CheckIcon = () => (
  <svg width="26" height="22" viewBox="0 0 26 22">
    <path d="M2 12L10 20L24 2" fill="none" stroke="#d2d2d2" strokeWidth="4.2" />
  </svg>
);

const COLUMNS = [
  { name: 'A', w: 110, on: true },
  { name: 'B', w: 156 },
  ...'CDEFGHIJKLMNOPQRST'.split('').map(name => ({ name, w: 130 })),
];

const DATA = {
  1: ['id', 'Level'],
  2: [1, 'Floor 1'],
  3: [2, 'Floor 2'],
  4: [3, 'Floor 3'],
  5: [4, 'Floor 4'],
};

const ROWS = Array.from({ length: 15 }, (_, i) => i + 1);

function TitleArea() {
  return (
    <TitleBar>
      <TitleRow>
        <QuickBar>
          <Light $dot />
          <Light />
          <Light />
          <QuickSep />
          <Tool $ml={32}><SidebarIcon /></Tool>
          <Tool $ml={32}><SaveIcon /></Tool>
          <Tool $ml={32}><UndoIcon /></Tool>
          <Tool $ml={16}><Caret $c={ICON} /></Tool>
          <Tool $ml={30}><RedoIcon /></Tool>
          <Tool $ml={41}><CustomizeIcon /></Tool>
        </QuickBar>
        <DocTitle>
          <XlsDocIcon />
          Sample-VBCS-DataModel
        </DocTitle>
        <TitleRight>
          <Search>
            <MagnifierIcon />
            Search Sheet
          </Search>
          <SmileIcon />
          <Tool $ml={8}><Caret $c={ICON} /></Tool>
        </TitleRight>
      </TitleRow>
      <TabRow>
        <HomeTab>Home</HomeTab>
        {['Insert', 'Page Layout', 'Formulas', 'Data', 'Review', 'View'].map(t => (
          <Tab key={t}>{t}</Tab>
        ))}
        <ShareBox>
          <ShareIcon />
          <ShareText>Share</ShareText>
          <ChevronUp />
        </ShareBox>
      </TabRow>
    </TitleBar>
  );
}

function RibbonArea() {
  return (
    <Ribbon>
      <Group $w={214} $pad="0 0 0 24px" $gap={28}>
        <BigButton $w={80}>
          <IconRow $shift={8} $gap={19}>
            <PasteIcon />
            <Caret />
          </IconRow>
          <BigLabel>Paste</BigLabel>
        </BigButton>
        <SmallCol $w={64}>
          <SmallRow $h={32}><SmallIcon><ScissorsIcon /></SmallIcon></SmallRow>
          <SmallRow $h={30} $gap={14}><SmallIcon><CopyIcon /></SmallIcon><Caret /></SmallRow>
          <SmallRow $h={31}><SmallIcon><FormatPainterIcon /></SmallIcon></SmallRow>
        </SmallCol>
      </Group>

      <Group $w={484} $pad="8px 0 0 17px" $dir="column" $gap={14}>
        <Row $h={47}>
          <Combo $w={208}>Calibri (Body)<ComboArrow><Caret /></ComboArrow></Combo>
          <Combo $w={104}>12<ComboArrow><Caret /></ComboArrow></Combo>
          <Seg>
            <Cell $w={58}><GrowA $s={30}>A</GrowA><svg width="14" height="12"><path d="M0 11L7 1L14 11Z" fill="#4a86d8" /></svg></Cell>
            <Cell $w={57} $last><GrowA $s={25}>A</GrowA><svg width="14" height="11"><path d="M0 1L14 1L7 10Z" fill="#4a86d8" /></svg></Cell>
          </Seg>
        </Row>
        <Row $gap={11}>
          <Seg>
            <Cell $w={58}><Bold>B</Bold></Cell>
            <Cell $w={58}><Ital>I</Ital></Cell>
            <Cell $w={56} $thin><Under>U</Under></Cell>
            <Cell $w={23} $last><Caret /></Cell>
          </Seg>
          <Seg>
            <Cell $w={53} $thin><BorderIcon /></Cell>
            <Cell $w={24} $last><Caret /></Cell>
          </Seg>
          <Seg>
            <Cell $w={50} $thin><FillIcon /></Cell>
            <Cell $w={24}><Caret /></Cell>
            <Cell $w={55} $thin><ColorAIcon /></Cell>
            <Cell $w={24} $last><Caret /></Cell>
          </Seg>
        </Row>
      </Group>

      <Group $w={337} $pad="8px 0 0 17px" $dir="column" $gap={14}>
        <Row $h={47} $gap={11}>
          <Seg>
            <Cell $w={58} $h={47}><VAlignIcon y={11} /></Cell>
            <Cell $w={58} $h={47}><VAlignIcon y={19} /></Cell>
            <Cell $w={58} $h={47} $active $last><VAlignIcon y={26} /></Cell>
          </Seg>
          <Seg>
            <Cell $w={71} $h={47} $last $gap={4}><OrientIcon /><Caret /></Cell>
          </Seg>
        </Row>
        <Row $gap={11}>
          <Seg>
            <Cell $w={58}><HAlignIcon short="left" /></Cell>
            <Cell $w={58}><HAlignIcon short="center" /></Cell>
            <Cell $w={58} $last><HAlignIcon short="right" /></Cell>
          </Seg>
          <Seg>
            <Cell $w={57}><IndentIcon /></Cell>
            <Cell $w={58} $last><IndentIcon flip /></Cell>
          </Seg>
        </Row>
      </Group>

      <Group $w={281} $pad="10px 0 0 26px" $dir="column" $gap={14}>
        <TextCmd>
          <CmdIcon><WrapIcon /></CmdIcon>
          Wrap Text
        </TextCmd>
        <TextCmd>
          <CmdIcon $pl={2}><MergeIcon /></CmdIcon>
          Merge &amp; Center
          <CmdCaret><Caret /></CmdCaret>
        </TextCmd>
      </Group>

      <Group $w={352} $pad="8px 0 0 17px" $dir="column" $gap={14}>
        <Row $h={47}>
          <Combo $w={316}>General<ComboArrow><Caret /></ComboArrow></Combo>
        </Row>
        <Row>
          <Seg>
            <Cell $w={74} $gap={11}><Symbol>$</Symbol><Caret /></Cell>
            <Cell $w={58}><Symbol>%</Symbol></Cell>
            <Cell $w={58} $last><CommaIcon /></Cell>
          </Seg>
          <Seg>
            <Cell $w={58}><DecIcon /></Cell>
            <Cell $w={58} $last><DecIcon down /></Cell>
          </Seg>
        </Row>
      </Group>

      <Group $w={358} $pad="0 0 0 18px">
        <BigButton $w={114}>
          <IconRow><CondFormatIcon /><Caret /></IconRow>
          <BigLabel>{'Conditional\nFormatting'}</BigLabel>
        </BigButton>
        <BigButton $w={114}>
          <IconRow><TableStyleIcon /><Caret /></IconRow>
          <BigLabel>{'Format\nas Table'}</BigLabel>
        </BigButton>
        <BigButton $w={92}>
          <IconRow><CellStyleIcon /><Caret /></IconRow>
          <BigLabel>{'Cell\nStyles'}</BigLabel>
        </BigButton>
      </Group>

      <Group $w={336} $pad="0 0 0 12px">
        <BigButton $w={103}>
          <IconRow $gap={12}><InsertIcon /><Caret /></IconRow>
          <BigLabel>Insert</BigLabel>
        </BigButton>
        <BigButton $w={103}>
          <IconRow $gap={12}><DeleteIcon /><Caret /></IconRow>
          <BigLabel>Delete</BigLabel>
        </BigButton>
        <BigButton $w={103}>
          <IconRow $gap={11}><FormatCellsIcon /><Caret /></IconRow>
          <BigLabel>Format</BigLabel>
        </BigButton>
      </Group>

      <Group $w={230} $pad="0 0 0 28px" $last>
        <SmallCol $w={68}>
          <SmallRow $h={32} $gap={14}><SmallIcon><SigmaIcon /></SmallIcon><Caret /></SmallRow>
          <SmallRow $h={30} $gap={8}><SmallIcon><FillDownIcon /></SmallIcon><Caret /></SmallRow>
          <SmallRow $h={31} $gap={8}><SmallIcon><EraserIcon /></SmallIcon><Caret /></SmallRow>
        </SmallCol>
        <BigButton $w={100}>
          <IconRow $gap={6}><SortFilterIcon /><Caret /></IconRow>
          <BigLabel>{'Sort &\nFilter'}</BigLabel>
        </BigButton>
      </Group>
    </Ribbon>
  );
}

export default function App() {
  return (
    <>
      <GlobalStyle />
      <Stage>
        <Window>
          <TitleArea />
          <RibbonArea />

          <FormulaBar>
            <NameBox>
              A10
              <Spinner><CaretUp /><CaretDown /></Spinner>
            </NameBox>
            <FormulaTools>
              <CancelIcon />
              <CheckIcon />
              <Fx>fx</Fx>
              <FxSep />
            </FormulaTools>
            <FormulaEnd><Caret $s={6} /></FormulaEnd>
          </FormulaBar>

          <Sheet>
            <SheetRow $h={45}>
              <Corner><CornerMark /></Corner>
              {COLUMNS.map(c => (
                <ColHead key={c.name} $w={c.w} $on={c.on}>{c.name}</ColHead>
              ))}
            </SheetRow>
            {ROWS.map(r => (
              <SheetRow key={r}>
                <RowHead $on={r === 10}>{r}</RowHead>
                {COLUMNS.map((c, i) => {
                  const v = DATA[r] && DATA[r][i];
                  return (
                    <GridCell key={c.name} $w={c.w} $num={typeof v === 'number'}>
                      {v}
                      {r === 10 && i === 0 && <Selection />}
                    </GridCell>
                  );
                })}
              </SheetRow>
            ))}
            <ScrollThumb />
          </Sheet>

          <TabBar>
            <TabArrows><ArrowLeft /><ArrowRight /></TabArrows>
            <ActiveTab $w={167}>Location</ActiveTab>
            <SheetTab $w={201}>Department</SheetTab>
            <SheetTab $w={179}>Employee</SheetTab>
            <AddTab $w={76}>+</AddTab>
          </TabBar>

          <StatusBar>
            <Ready>Ready</Ready>
            <ViewBtn $w={74} $on><GridViewIcon /></ViewBtn>
            <ViewBtn $w={72}><PageViewIcon /></ViewBtn>
            <ViewBtn $w={70}><BreakViewIcon /></ViewBtn>
            <Zoom>
              <ZoomMark />
              <Slider><Thumb /></Slider>
              <ZoomMark $plus />
              <ZoomValue>100%</ZoomValue>
            </Zoom>
          </StatusBar>
        </Window>
      </Stage>
    </>
  );
}
